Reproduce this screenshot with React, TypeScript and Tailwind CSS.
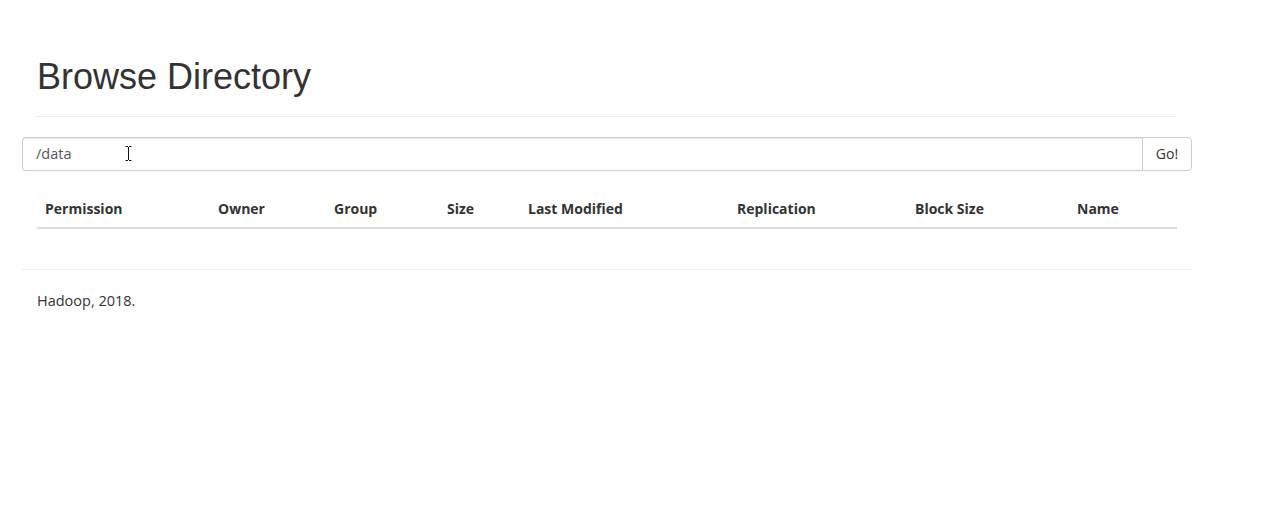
const COLUMNS = [
  'Permission',
  'Owner',
  'Group',
  'Size',
  'Last Modified',
  'Replication',
  'Block Size',
  'Name',
];

function TextCursor() {
  // mouse I-beam caught in the screenshot
  return (
    <svg
      className="absolute left-[102px] top-[8px]"
      width="7"
      height="15"
      viewBox="0 0 7 15"
      fill="none"
      stroke="#111"
      strokeWidth={1}
    >
      <path d="M0.5 0.5h2.5M4 0.5h2.5M3.5 1v13M0.5 14.5h2.5M4 14.5h2.5" />
    </svg>
  );
}

export default function App() {
  return (
    <div
      className="min-h-screen w-full bg-white text-[#333] text-[14px]"
      style={{ fontFamily: '"Open Sans", "Noto Sans", sans-serif' }}
    >
      <div className="ml-[22px] w-[1170px]">
        {/* Header */}
        <div className="mx-[15px] pt-[57px] pb-[9px] border-b border-[#eee] mb-[20px]">
          <h1
            className="text-[36px] leading-[1.1] font-normal mb-[10px]"
            style={{ fontFamily: '"Liberation Sans", Arial, sans-serif' }}
          >
            Browse Directory
          </h1>
        </div>

        {/* Path input */}
        <div className="flex h-[34px]">
          <div className="relative flex-1 flex items-center border border-[#ccc] border-r-0 rounded-l-[4px] pl-[13px] pr-[12px] text-[#555] shadow-[inset_0_1px_1px_rgba(0,0,0,0.075)]">
            <span className="text-[14.5px]">/data</span>
            <TextCursor />
          </div>
          <button className="w-[50px] border border-[#ccc] rounded-r-[4px] bg-white text-[#333] flex items-center justify-center">
            Go!
          </button>
        </div>

        {/* Table */}
        <div className="mx-[15px] mt-[20px] mb-[20px]">
          <div className="grid grid-cols-[173px_116px_113px_81px_209px_178px_162px_108px] border-b-2 border-[#ddd]">
            {COLUMNS.map((c) => (
              <div key={c} className="px-[8px] pt-[8px] pb-[8px] leading-[20px] font-bold whitespace-nowrap">
                {c}
              </div>
            ))}
          </div>
        </div>

        {/* Footer */}
        <hr className="mt-[40px] mb-[21px] border-0 border-t border-[#eee]" />
        <p className="mx-[15px] leading-[20px] text-[14.5px]">Hadoop, 2018.</p>
      </div>
    </div>
  );
}
